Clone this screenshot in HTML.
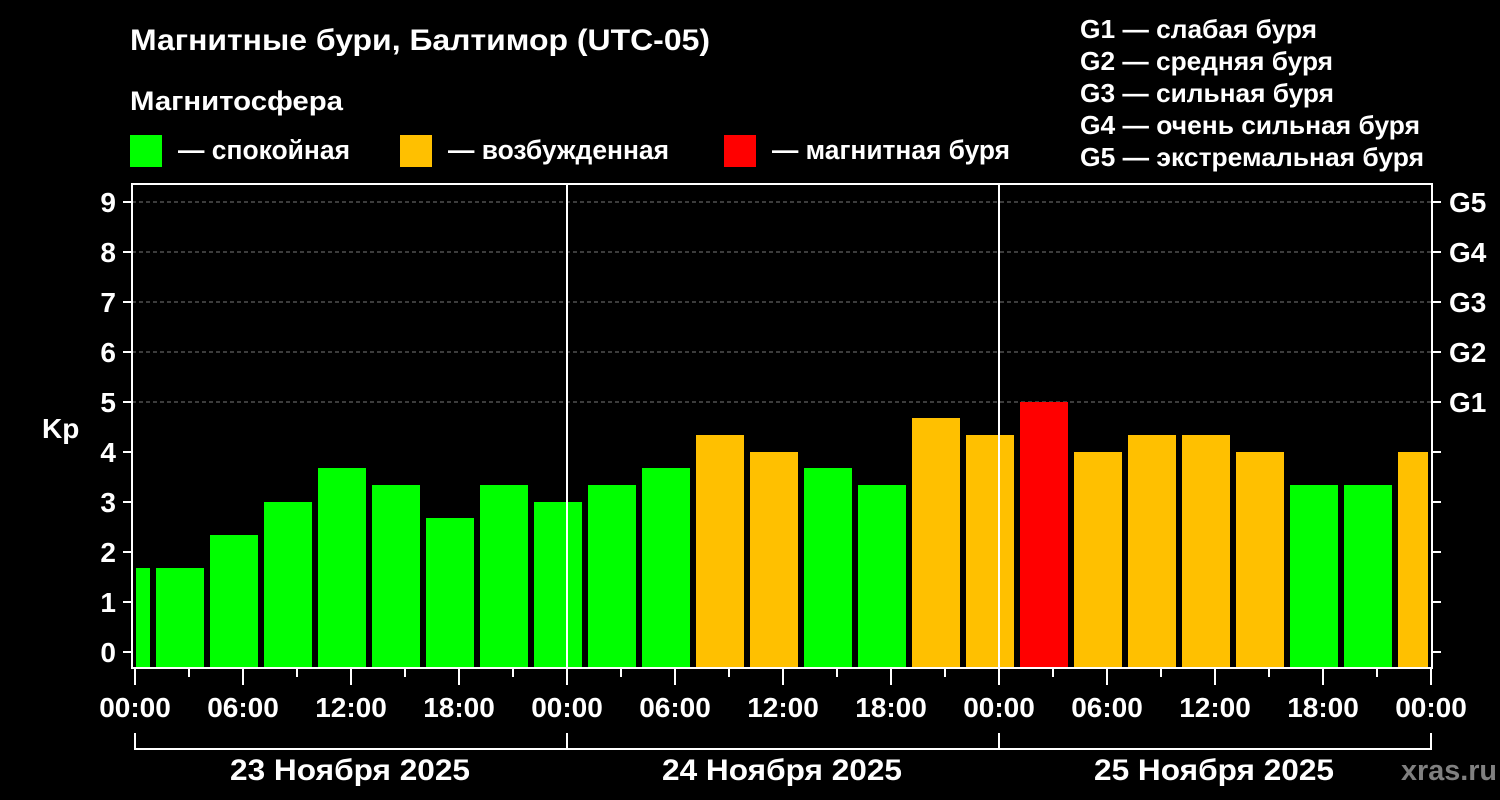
<!DOCTYPE html>
<html><head><meta charset="utf-8"><style>
html,body{margin:0;padding:0;background:#000;}
svg{display:block}
text{font-family:"Liberation Sans",Arial,sans-serif;font-weight:bold;fill:#fff}
</style></head><body>
<svg width="1500" height="800" viewBox="0 0 1500 800" xmlns="http://www.w3.org/2000/svg">
<rect width="1500" height="800" fill="#000"/>
<text x="130" y="50" font-size="30" textLength="580" lengthAdjust="spacingAndGlyphs">Магнитные бури, Балтимор (UTC-05)</text>
<text x="130" y="110" font-size="27" textLength="213" lengthAdjust="spacingAndGlyphs">Магнитосфера</text>
<rect x="130" y="135" width="32" height="32" fill="#00ff00"/>
<text x="178" y="159" font-size="27" textLength="172" lengthAdjust="spacingAndGlyphs">— спокойная</text>
<rect x="400" y="135" width="32" height="32" fill="#ffc000"/>
<text x="448" y="159" font-size="27" textLength="221" lengthAdjust="spacingAndGlyphs">— возбужденная</text>
<rect x="724" y="135" width="32" height="32" fill="#ff0000"/>
<text x="772" y="159" font-size="27" textLength="238" lengthAdjust="spacingAndGlyphs">— магнитная буря</text>
<g font-size="26">
<text x="1080" y="38" textLength="237" lengthAdjust="spacingAndGlyphs">G1 — слабая буря</text>
<text x="1080" y="70" textLength="253" lengthAdjust="spacingAndGlyphs">G2 — средняя буря</text>
<text x="1080" y="102" textLength="254" lengthAdjust="spacingAndGlyphs">G3 — сильная буря</text>
<text x="1080" y="134" textLength="340" lengthAdjust="spacingAndGlyphs">G4 — очень сильная буря</text>
<text x="1080" y="166" textLength="344" lengthAdjust="spacingAndGlyphs">G5 — экстремальная буря</text>
</g>
<g stroke="#777" stroke-width="1" stroke-dasharray="4,3">
<line x1="132" y1="202" x2="1432" y2="202"/>
<line x1="132" y1="252" x2="1432" y2="252"/>
<line x1="132" y1="302" x2="1432" y2="302"/>
<line x1="132" y1="352" x2="1432" y2="352"/>
<line x1="132" y1="402" x2="1432" y2="402"/>
</g>
<g>
<rect x="136" y="568" width="14" height="100" fill="#00ff00"/>
<rect x="156" y="568" width="48" height="100" fill="#00ff00"/>
<rect x="210" y="535" width="48" height="133" fill="#00ff00"/>
<rect x="264" y="502" width="48" height="166" fill="#00ff00"/>
<rect x="318" y="468" width="48" height="200" fill="#00ff00"/>
<rect x="372" y="485" width="48" height="183" fill="#00ff00"/>
<rect x="426" y="518" width="48" height="150" fill="#00ff00"/>
<rect x="480" y="485" width="48" height="183" fill="#00ff00"/>
<rect x="534" y="502" width="48" height="166" fill="#00ff00"/>
<rect x="588" y="485" width="48" height="183" fill="#00ff00"/>
<rect x="642" y="468" width="48" height="200" fill="#00ff00"/>
<rect x="696" y="435" width="48" height="233" fill="#ffc000"/>
<rect x="750" y="452" width="48" height="216" fill="#ffc000"/>
<rect x="804" y="468" width="48" height="200" fill="#00ff00"/>
<rect x="858" y="485" width="48" height="183" fill="#00ff00"/>
<rect x="912" y="418" width="48" height="250" fill="#ffc000"/>
<rect x="966" y="435" width="48" height="233" fill="#ffc000"/>
<rect x="1020" y="402" width="48" height="266" fill="#ff0000"/>
<rect x="1074" y="452" width="48" height="216" fill="#ffc000"/>
<rect x="1128" y="435" width="48" height="233" fill="#ffc000"/>
<rect x="1182" y="435" width="48" height="233" fill="#ffc000"/>
<rect x="1236" y="452" width="48" height="216" fill="#ffc000"/>
<rect x="1290" y="485" width="48" height="183" fill="#00ff00"/>
<rect x="1344" y="485" width="48" height="183" fill="#00ff00"/>
<rect x="1398" y="452" width="30" height="216" fill="#ffc000"/>
</g>
<g stroke="#fff" stroke-width="2">
<line x1="567" y1="183" x2="567" y2="668"/>
<line x1="999" y1="183" x2="999" y2="668"/>
</g>
<rect x="132" y="184" width="1300" height="484" fill="none" stroke="#fff" stroke-width="2"/>
<g stroke="#fff" stroke-width="2">
<line x1="123" y1="202" x2="132" y2="202"/><line x1="123" y1="252" x2="132" y2="252"/>
<line x1="123" y1="302" x2="132" y2="302"/><line x1="123" y1="352" x2="132" y2="352"/>
<line x1="123" y1="402" x2="132" y2="402"/><line x1="123" y1="452" x2="132" y2="452"/>
<line x1="123" y1="502" x2="132" y2="502"/><line x1="123" y1="552" x2="132" y2="552"/>
<line x1="123" y1="602" x2="132" y2="602"/><line x1="123" y1="652" x2="132" y2="652"/>
<line x1="1432" y1="202" x2="1441" y2="202"/><line x1="1432" y1="252" x2="1441" y2="252"/>
<line x1="1432" y1="302" x2="1441" y2="302"/><line x1="1432" y1="352" x2="1441" y2="352"/>
<line x1="1432" y1="402" x2="1441" y2="402"/><line x1="1432" y1="452" x2="1441" y2="452"/>
<line x1="1432" y1="502" x2="1441" y2="502"/><line x1="1432" y1="552" x2="1441" y2="552"/>
<line x1="1432" y1="602" x2="1441" y2="602"/><line x1="1432" y1="652" x2="1441" y2="652"/>
</g>
<g font-size="28" text-anchor="end">
<text x="116" y="212">9</text><text x="116" y="262">8</text><text x="116" y="312">7</text>
<text x="116" y="362">6</text><text x="116" y="412">5</text><text x="116" y="462">4</text>
<text x="116" y="512">3</text><text x="116" y="562">2</text><text x="116" y="612">1</text>
<text x="116" y="662">0</text>
</g>
<text x="42" y="438" font-size="28">Kp</text>
<g font-size="28">
<text x="1449" y="212">G5</text><text x="1449" y="262">G4</text><text x="1449" y="312">G3</text>
<text x="1449" y="362">G2</text><text x="1449" y="412">G1</text>
</g>
<g stroke="#fff" stroke-width="2">
<line x1="135" y1="669" x2="135" y2="685"/><line x1="189" y1="669" x2="189" y2="677"/>
<line x1="243" y1="669" x2="243" y2="685"/><line x1="297" y1="669" x2="297" y2="677"/>
<line x1="351" y1="669" x2="351" y2="685"/><line x1="405" y1="669" x2="405" y2="677"/>
<line x1="459" y1="669" x2="459" y2="685"/><line x1="513" y1="669" x2="513" y2="677"/>
<line x1="567" y1="669" x2="567" y2="685"/><line x1="621" y1="669" x2="621" y2="677"/>
<line x1="675" y1="669" x2="675" y2="685"/><line x1="729" y1="669" x2="729" y2="677"/>
<line x1="783" y1="669" x2="783" y2="685"/><line x1="837" y1="669" x2="837" y2="677"/>
<line x1="891" y1="669" x2="891" y2="685"/><line x1="945" y1="669" x2="945" y2="677"/>
<line x1="999" y1="669" x2="999" y2="685"/><line x1="1053" y1="669" x2="1053" y2="677"/>
<line x1="1107" y1="669" x2="1107" y2="685"/><line x1="1161" y1="669" x2="1161" y2="677"/>
<line x1="1215" y1="669" x2="1215" y2="685"/><line x1="1269" y1="669" x2="1269" y2="677"/>
<line x1="1323" y1="669" x2="1323" y2="685"/><line x1="1377" y1="669" x2="1377" y2="677"/>
<line x1="1431" y1="669" x2="1431" y2="685"/>
</g>
<g font-size="28" text-anchor="middle">
<text x="135" y="717">00:00</text><text x="243" y="717">06:00</text><text x="351" y="717">12:00</text>
<text x="459" y="717">18:00</text><text x="567" y="717">00:00</text><text x="675" y="717">06:00</text>
<text x="783" y="717">12:00</text><text x="891" y="717">18:00</text><text x="999" y="717">00:00</text>
<text x="1107" y="717">06:00</text><text x="1215" y="717">12:00</text><text x="1323" y="717">18:00</text>
<text x="1431" y="717">00:00</text>
</g>
<path d="M135 733 V749 H1431 V733 M567 733 V749 M999 733 V749" fill="none" stroke="#fff" stroke-width="2"/>
<g font-size="30" text-anchor="middle">
<text x="350" y="780" textLength="240" lengthAdjust="spacingAndGlyphs">23 Ноября 2025</text>
<text x="782" y="780" textLength="240" lengthAdjust="spacingAndGlyphs">24 Ноября 2025</text>
<text x="1214" y="780" textLength="240" lengthAdjust="spacingAndGlyphs">25 Ноября 2025</text>
</g>
<text x="1401" y="780" font-size="29" style="fill:#808080" textLength="96" lengthAdjust="spacingAndGlyphs">xras.ru</text>
</svg>
</body></html>
